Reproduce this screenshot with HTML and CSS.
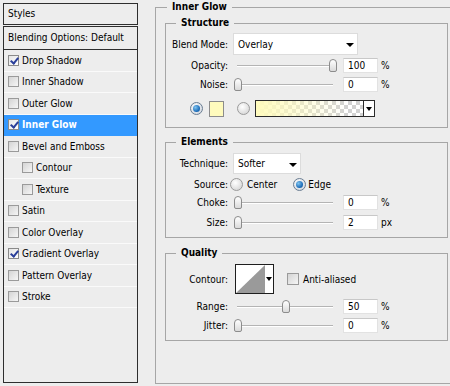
FILE: index.html
```html
<!DOCTYPE html>
<html>
<head>
<meta charset="utf-8">
<link rel="stylesheet" href="styles.css">
</head>
<body>
<div class="app">
  <aside class="styles-panel">
    <div class="styles-head">Styles</div>
    <ul class="style-list">
      <li class="blend-opt">Blending Options: Default</li>
      <li class="item"><span class="cb checked"></span>Drop Shadow</li>
      <li class="item"><span class="cb"></span>Inner Shadow</li>
      <li class="item"><span class="cb"></span>Outer Glow</li>
      <li class="item selected"><span class="cb checked"></span>Inner Glow</li>
      <li class="item"><span class="cb"></span>Bevel and Emboss</li>
      <li class="item sub"><span class="cb"></span>Contour</li>
      <li class="item sub"><span class="cb"></span>Texture</li>
      <li class="item"><span class="cb"></span>Satin</li>
      <li class="item"><span class="cb"></span>Color Overlay</li>
      <li class="item"><span class="cb checked"></span>Gradient Overlay</li>
      <li class="item"><span class="cb"></span>Pattern Overlay</li>
      <li class="item"><span class="cb"></span>Stroke</li>
    </ul>
  </aside>

  <main class="settings">
    <fieldset class="group outer">
      <legend class="outer-title">Inner Glow</legend>

      <fieldset class="group inner structure">
        <legend>Structure</legend>
        <div class="row row-blend">
          <span class="lbl">Blend Mode:</span>
          <div class="select select-blend"><span>Overlay</span><i class="arrow"></i></div>
        </div>
        <div class="row row-val row-opacity">
          <span class="lbl">Opacity:</span>
          <div class="slider"><div class="track"></div><div class="thumb" style="--v:100"></div></div>
          <div class="num">100</div><span class="unit">%</span>
        </div>
        <div class="row row-val row-noise">
          <span class="lbl">Noise:</span>
          <div class="slider"><div class="track"></div><div class="thumb" style="--v:0"></div></div>
          <div class="num">0</div><span class="unit">%</span>
        </div>
        <div class="row row-color">
          <span class="radio on first"></span>
          <span class="swatch"></span>
          <span class="radio second"></span>
          <div class="gradient"><div class="grad-fill"></div><div class="grad-btn"><i class="arrow"></i></div></div>
        </div>
      </fieldset>

      <fieldset class="group inner elements">
        <legend>Elements</legend>
        <div class="row row-tech">
          <span class="lbl">Technique:</span>
          <div class="select select-tech"><span>Softer</span><i class="arrow"></i></div>
        </div>
        <div class="row row-source">
          <span class="lbl">Source:</span>
          <span class="radio src-center"></span><span class="opt-text">Center</span>
          <span class="radio on src-edge"></span><span class="opt-text">Edge</span>
        </div>
        <div class="row row-val row-choke">
          <span class="lbl">Choke:</span>
          <div class="slider"><div class="track"></div><div class="thumb" style="--v:0"></div></div>
          <div class="num">0</div><span class="unit">%</span>
        </div>
        <div class="row row-val row-size">
          <span class="lbl">Size:</span>
          <div class="slider"><div class="track"></div><div class="thumb" style="--v:0"></div></div>
          <div class="num">2</div><span class="unit">px</span>
        </div>
      </fieldset>

      <fieldset class="group inner quality">
        <legend>Quality</legend>
        <div class="row row-contour">
          <span class="lbl">Contour:</span>
          <div class="contour">
            <svg class="contour-img" width="29" height="28" viewBox="0 0 29 28"><polygon points="0,28 29,0 29,28" fill="#9a9a9a"/></svg>
            <div class="contour-btn"><i class="arrow"></i></div>
          </div>
          <span class="cb aa"></span><span class="opt-text">Anti-aliased</span>
        </div>
        <div class="row row-val row-range">
          <span class="lbl">Range:</span>
          <div class="slider"><div class="track"></div><div class="thumb" style="--v:50"></div></div>
          <div class="num">50</div><span class="unit">%</span>
        </div>
        <div class="row row-val row-jitter">
          <span class="lbl">Jitter:</span>
          <div class="slider"><div class="track"></div><div class="thumb" style="--v:0"></div></div>
          <div class="num">0</div><span class="unit">%</span>
        </div>
      </fieldset>
    </fieldset>
  </main>
</div>
</body>
</html>
```

FILE: styles.css
```css
* { box-sizing: border-box; }
html, body { margin: 0; padding: 0; }
body {
  background: #ededed;
  font-family: "DejaVu Sans Condensed", "DejaVu Sans", sans-serif;
  font-size: 10px;
  color: #000;
  width: 450px;
  height: 386px;
  overflow: hidden;
}
.app {
  display: flex;
  width: 450px;
  height: 386px;
  overflow: hidden;
}

/* ---------- left styles panel ---------- */
.styles-panel {
  margin: 3px 0 0 3px;
  width: 135px;
  flex: none;
  display: flex;
  flex-direction: column;
}
.styles-head {
  height: 22px;
  border: 1px solid #2e2e2e;
  padding-left: 4px;
  line-height: 20px;
}
.style-list {
  list-style: none;
  margin: 1px 0 0 0;
  padding: 0;
  height: 357px;
  border: 1px solid #2e2e2e;
}
.blend-opt {
  height: 23px;
  line-height: 22px;
  padding-left: 4px;
  border-bottom: 1px solid #2e2e2e;
}
.item {
  height: 21.5px;
  border-bottom: 1px solid #fafafa;
  display: flex;
  align-items: center;
  padding-left: 4px;
}
.item.sub { padding-left: 18px; }
.item.selected {
  background: #3399ff;
  color: #fff;
  font-weight: bold;
  border-bottom-color: #3399ff;
}
.cb {
  width: 11px;
  height: 11px;
  flex: none;
  border: 1px solid #9a9a9a;
  background: linear-gradient(135deg, #d4d4d4, #f6f6f6);
  margin-right: 3px;
  position: relative;
}
.cb.checked {
  background: linear-gradient(135deg, #e4e4e4, #ffffff);
  border-color: #8a8a8a;
}
.cb.checked::after {
  content: "";
  position: absolute;
  left: 3px;
  top: 0px;
  width: 3px;
  height: 6px;
  border-right: 2px solid #2a3f9a;
  border-bottom: 2px solid #2a3f9a;
  transform: rotate(40deg);
}

/* ---------- right settings ---------- */
.settings {
  margin-left: 17px;
  flex: none;
  width: 310px;
}
.group {
  margin: 0;
  border: 1px solid #a6a6a6;
  min-width: 0;
}
.group legend {
  font-weight: bold;
  line-height: 14px;
  padding: 0 5px;
  margin-left: 10px;
}
.outer {
  padding: 0 0 42px 9px;
  border-right: none;
}
.outer .outer-title { margin-left: 2px; }
.inner {
  width: 283px;
  padding: 0 0 0 0;
}
.structure { margin-top: 2px; padding-bottom: 10px; }
.elements { margin-top: 7px; padding-bottom: 7px; }
.quality { margin-top: 8px; padding-bottom: 7px; }

.row {
  display: flex;
  align-items: center;
}
.lbl {
  width: 62px;
  text-align: right;
  margin-right: 5px;
  flex: none;
  white-space: nowrap;
}

/* select boxes */
.select {
  background: #fff;
  border: 1px solid #dcdcdc;
  position: relative;
  display: flex;
  align-items: center;
  padding-left: 4px;
}
.select-blend { width: 125px; height: 22px; }
.select-tech { width: 68px; height: 21px; }
.arrow {
  display: block;
  width: 0;
  height: 0;
  border-left: 4px solid transparent;
  border-right: 4px solid transparent;
  border-top: 4px solid #000;
}
.select .arrow {
  position: absolute;
  right: 3px;
  top: 50%;
  margin-top: -1px;
}

/* sliders */
.row-val { height: 15px; }
.slider {
  width: 105px;
  height: 15px;
  position: relative;
  flex: none;
}
.track {
  position: absolute;
  left: 4px;
  top: 7px;
  width: 96px;
  height: 2px;
  border-top: 1px solid #b4b4b4;
  border-bottom: 1px solid #fff;
}
.thumb {
  position: absolute;
  top: 1px;
  left: calc(5px + var(--v) * 0.95px - 4px);
  width: 8px;
  height: 13px;
  border: 1px solid #8c8c8c;
  border-radius: 4px 4px 2px 2px;
  background: linear-gradient(#ffffff, #dadada);
}
.num {
  margin-left: 5px;
  width: 35px;
  height: 15px;
  background: #fff;
  border: 1px solid #e2e2e2;
  border-top-color: #c8c8c8;
  padding-left: 4px;
  line-height: 13px;
  flex: none;
}
.unit { margin-left: 3px; }

/* structure rows */
.row-blend { margin-top: 3px; height: 22px; }
.row-opacity { margin-top: 3px; }
.row-noise { margin-top: 4px; }
.row-color { margin-top: 8px; height: 17px; }

.radio {
  width: 13px;
  height: 13px;
  flex: none;
  border-radius: 50%;
  border: 1px solid #9a9a9a;
  background: radial-gradient(circle at 40% 35%, #ffffff, #dcdcdc 70%);
  position: relative;
}
.radio.on {
  border-color: #6a7d92;
  background: radial-gradient(circle at 40% 35%, #ffffff, #d8dde4 70%);
}
.radio.on::after {
  content: "";
  position: absolute;
  left: 2px;
  top: 2px;
  width: 7px;
  height: 7px;
  border-radius: 50%;
  background: radial-gradient(circle at 35% 35%, #7fc4f0, #1c6cb8 65%, #0e4b8a);
}
.radio.first { margin-left: 24px; }
.swatch {
  margin-left: 6px;
  width: 15px;
  height: 16px;
  border: 1px solid #8c8c8c;
  background: #fffbbd;
  flex: none;
}
.radio.second { margin-left: 13px; }
.gradient {
  margin-left: 5px;
  width: 120px;
  height: 17px;
  border: 1px solid #2b2b2b;
  display: flex;
  flex: none;
}
.grad-fill {
  flex: 1;
  background:
    linear-gradient(to right, #fffbbd 0%, rgba(255,251,189,0.6) 35%, rgba(255,251,189,0) 85%),
    repeating-conic-gradient(#d2d2d2 0 25%, #ffffff 0 50%) 0 0 / 8px 8px;
}
.grad-btn {
  width: 11px;
  border-left: 1px solid #2b2b2b;
  background: #fff;
  display: flex;
  align-items: center;
  justify-content: center;
}
.grad-btn .arrow { border-left-width: 3px; border-right-width: 3px; border-top-width: 4px; }

/* elements rows */
.row-tech { margin-top: 4px; height: 21px; }
.row-source { margin-top: 3px; height: 14px; }
.row-source .lbl { margin-right: 2px; }
.opt-text { margin-left: 4px; }
.radio.src-edge { margin-left: 16px; }
.row-source .src-edge + .opt-text { margin-left: 2px; }
.row-choke { margin-top: 4px; }
.row-size { margin-top: 5px; }

/* quality rows */
.row-contour { margin-top: 4px; height: 30px; }
.contour {
  margin-left: 2px;
  width: 39px;
  height: 30px;
  border: 1px solid #1e1e1e;
  background: #fff;
  display: flex;
  flex: none;
}
.contour-img { display: block; flex: none; }
.contour-btn {
  flex: 1;
  display: flex;
  align-items: center;
  justify-content: center;
}
.contour-btn .arrow { border-left-width: 3px; border-right-width: 3px; border-top-width: 4px; }
.cb.aa { margin-left: 13px; margin-right: 0; width: 12px; height: 12px; }
.row-contour .opt-text { margin-left: 4px; }
.row-range { margin-top: 5px; }
.row-jitter { margin-top: 4px; }
```
